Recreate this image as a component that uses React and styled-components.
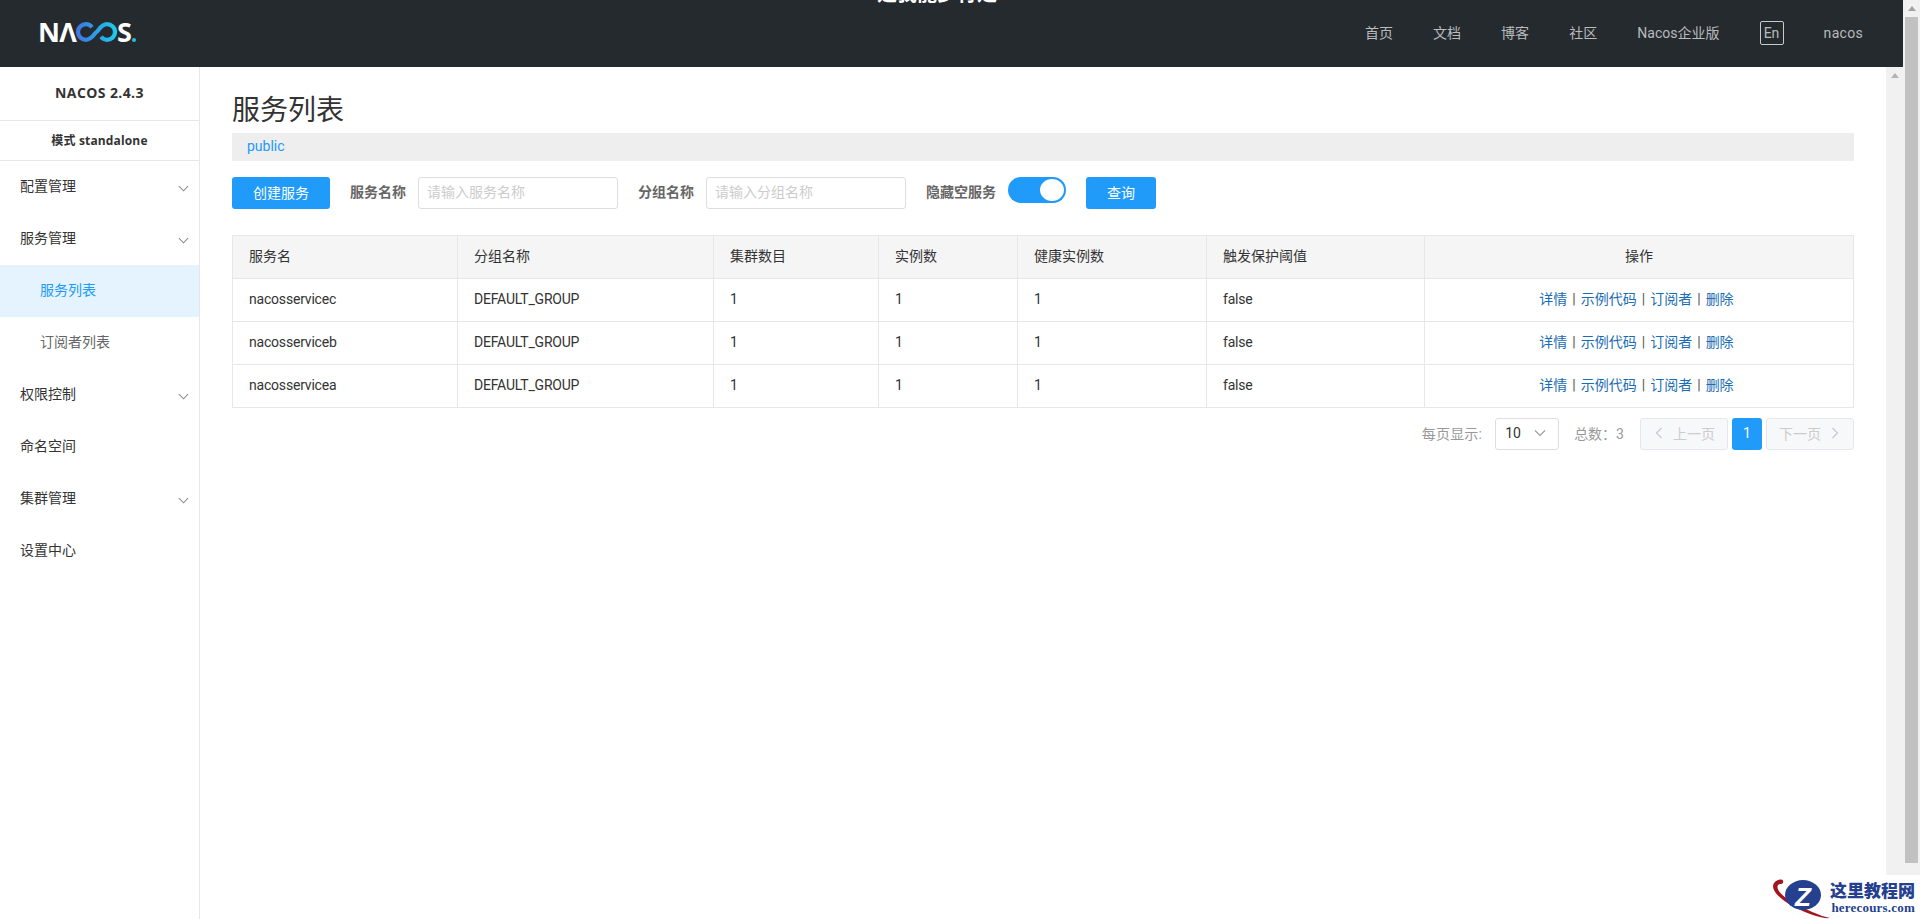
import React from "react";
import styled, { createGlobalStyle } from "styled-components";

const GlobalStyle = createGlobalStyle`
  html, body {
    margin: 0;
    height: 100%;
    overflow: hidden;
    background: #fff;
  }
  body {
    font-family: Roboto, "Noto Sans CJK SC", sans-serif;
    font-size: 14px;
    color: #333;
  }
  * {
    box-sizing: border-box;
  }
`;

const columns = [
  { title: "服务名", width: 225 },
  { title: "分组名称", width: 256 },
  { title: "集群数目", width: 165 },
  { title: "实例数", width: 139 },
  { title: "健康实例数", width: 189 },
  { title: "触发保护阈值", width: 218 },
  { title: "操作", width: 429, center: true },
];

const services = ["nacosservicec", "nacosserviceb", "nacosservicea"];
const actions = ["详情", "示例代码", "订阅者", "删除"];
const navLinks = ["首页", "文档", "博客", "社区", "Nacos企业版"];

const menu = [
  { label: "配置管理", arrow: true },
  { label: "服务管理", arrow: true },
  { label: "服务列表", sub: true, active: true },
  { label: "订阅者列表", sub: true },
  { label: "权限控制", arrow: true },
  { label: "命名空间" },
  { label: "集群管理", arrow: true },
  { label: "设置中心" },
];

const Chevron = ({ dir = "down", color = "#888", size = 11 }) => (
  <ChevronSvg width={size} height={size} viewBox="0 0 12 12" $dir={dir}>
    <polyline points="1,3.5 6,8.5 11,3.5" fill="none" stroke={color} strokeWidth="1.1" />
  </ChevronSvg>
);

export default function App() {
  return (
    <Page>
      <GlobalStyle />
      <Shell>
        <Header>
          <ClippedTitle>是我能步行走</ClippedTitle>
          <Logo aria-label="NACOS">
            <LogoLetters>NΛ</LogoLetters>
            <svg width="41" height="20" viewBox="0 0 41 20">
              <defs>
                <linearGradient id="nacosLoop" x1="0" x2="1" y1="0" y2="0">
                  <stop offset="0" stopColor="#3f78e0" />
                  <stop offset="0.45" stopColor="#2d9be8" />
                  <stop offset="1" stopColor="#20c8ea" />
                </linearGradient>
              </defs>
              <path
                d="M16 5.2C14.5 3.3 12.6 2.200 10 2.200C5.4 2.200 2 5.600 2 10C2 14.400 5.400 17.800 10 17.800C16 17.800 19.500 10 20.500 10C21.500 10 25 2.200 31 2.200C35.600 2.200 39 5.600 39 10C39 14.400 35.600 17.800 31 17.800C28.400 17.800 26.500 16.700 25 14.800"
                fill="none"
                stroke="url(#nacosLoop)"
                strokeWidth="4.2"
              />
            </svg>
            <LogoLetters>S</LogoLetters>
            <LogoDot />
          </Logo>
          <Nav>
            {navLinks.map((link) => (
              <NavLink key={link}>{link}</NavLink>
            ))}
            <LangBox>En</LangBox>
            <NavLink $spaced>nacos</NavLink>
          </Nav>
        </Header>
        <Body>
          <Sidebar>
            <VersionRow>NACOS 2.4.3</VersionRow>
            <ModeRow>模式 standalone</ModeRow>
            {menu.map((item) => (
              <MenuItem key={item.label} $sub={item.sub} $active={item.active}>
                {item.label}
                {item.arrow && (
                  <MenuArrow>
                    <Chevron />
                  </MenuArrow>
                )}
              </MenuItem>
            ))}
          </Sidebar>
          <Main>
            <Title>服务列表</Title>
            <NamespaceBar>public</NamespaceBar>
            <Toolbar>
              <PrimaryButton $width={98}>创建服务</PrimaryButton>
              <FormItem>
                <FormLabel>服务名称</FormLabel>
                <TextInput placeholder="请输入服务名称" />
              </FormItem>
              <FormItem>
                <FormLabel>分组名称</FormLabel>
                <TextInput placeholder="请输入分组名称" />
              </FormItem>
              <FormItem>
                <FormLabel>隐藏空服务</FormLabel>
                <Switch>
                  <SwitchKnob />
                </Switch>
              </FormItem>
              <PrimaryButton $width={70}>查询</PrimaryButton>
            </Toolbar>
            <ServiceTable>
              <colgroup>
                {columns.map((col) => (
                  <TableCol key={col.title} $width={col.width} />
                ))}
              </colgroup>
              <thead>
                <tr>
                  {columns.map((col) => (
                    <HeadCell key={col.title} $center={col.center}>
                      {col.title}
                    </HeadCell>
                  ))}
                </tr>
              </thead>
              <tbody>
                {services.map((name) => (
                  <tr key={name}>
                    <Cell>{name}</Cell>
                    <Cell>DEFAULT_GROUP</Cell>
                    <Cell>1</Cell>
                    <Cell>1</Cell>
                    <Cell>1</Cell>
                    <Cell>false</Cell>
                    <ActionCell>
                      {actions.map((action, index) => (
                        <React.Fragment key={action}>
                          {index > 0 && <Separator>|</Separator>}
                          <ActionLink>{action}</ActionLink>
                        </React.Fragment>
                      ))}
                    </ActionCell>
                  </tr>
                ))}
              </tbody>
            </ServiceTable>
            <Pagination>
              <PageLabel>每页显示:</PageLabel>
              <PageSelect>
                10
                <Chevron color="#999" size={12} />
              </PageSelect>
              <PageTotal>总数：3</PageTotal>
              <PageButtons>
                <PageNavButton>
                  <Chevron dir="left" color="#c4c6cf" size={12} />
                  上一页
                </PageNavButton>
                <PageCurrent>1</PageCurrent>
                <PageNavButton>
                  下一页
                  <Chevron dir="right" color="#c4c6cf" size={12} />
                </PageNavButton>
              </PageButtons>
            </Pagination>
          </Main>
          <InnerScrollbar>
            <ScrollArrow $color="#b4b4b4" />
          </InnerScrollbar>
        </Body>
      </Shell>
      <OuterScrollbar>
        <ScrollArrow $color="#a3a3a3" />
        <ScrollThumb />
      </OuterScrollbar>
      <Watermark>
        <WatermarkLogo width="58" height="42" viewBox="0 0 58 42">
          <path
            d="M6 3C1 5 0 9 2 13C6 22 24 33 44 39C49 40.500 54 41.500 58 41C48 39 32 32 19 24C11 19 5 14 5.500 9.500C5.800 7.500 7 7 9 7C11.500 7 12 3.500 10 2.800C8.500 2.300 7.200 2.500 6 3Z"
            fill="#a3141c"
          />
          <ellipse cx="31" cy="18" rx="18" ry="15" fill="#25408f" />
          <WatermarkZ x="31" y="29">Z</WatermarkZ>
        </WatermarkLogo>
        <WatermarkText>
          <WatermarkName>这里教程网</WatermarkName>
          <WatermarkUrl>herecours.com</WatermarkUrl>
        </WatermarkText>
      </Watermark>
    </Page>
  );
}

const Page = styled.div`
  position: relative;
  display: flex;
  width: 100%;
  height: 100vh;
  overflow: hidden;
`;

const Shell = styled.div`
  flex: 1;
  min-width: 0;
  display: flex;
  flex-direction: column;
`;

const Header = styled.header`
  position: relative;
  flex: 0 0 67px;
  display: flex;
  align-items: center;
  justify-content: space-between;
  padding: 0 40px 0 38px;
  background: #252a2f;
  overflow: hidden;
`;

const ClippedTitle = styled.div`
  position: absolute;
  left: 877px;
  top: -16px;
  font-size: 20px;
  line-height: 20px;
  font-weight: 700;
  color: #fff;
  white-space: nowrap;
`;

const Logo = styled.div`
  display: flex;
  align-items: center;
  margin-top: -3px;
`;

const LogoLetters = styled.span`
  font-family: "Open Sans", sans-serif;
  font-size: 27px;
  line-height: 26px;
  font-weight: 700;
  color: #fff;
  letter-spacing: -0.8px;
`;

const LogoDot = styled.span`
  align-self: flex-end;
  width: 4px;
  height: 4px;
  margin: 0 0 3px 1px;
  border-radius: 50%;
  background: #22c4d6;
`;

const Nav = styled.nav`
  display: flex;
  align-items: center;
  gap: 40.1px;
  margin-top: -2px;
`;

const NavLink = styled.a`
  color: #b9bbbd;
  font-size: 14px;
  line-height: 20px;
  white-space: nowrap;
  letter-spacing: ${(p) => (p.$spaced ? "0.3px" : "0")};
`;

const LangBox = styled.span`
  display: flex;
  align-items: center;
  justify-content: center;
  width: 24px;
  height: 24px;
  border: 1px solid #c8c9ca;
  border-radius: 2px;
  color: #b9bbbd;
  font-size: 14px;
`;

const Body = styled.div`
  flex: 1;
  min-height: 0;
  display: flex;
`;

const Sidebar = styled.aside`
  flex: 0 0 200px;
  border-right: 1px solid #e6e7eb;
`;

const VersionRow = styled.div`
  height: 54px;
  padding-bottom: 2px;
  display: flex;
  align-items: center;
  justify-content: center;
  border-bottom: 1px solid #e6e7eb;
  font-family: "Open Sans", "Noto Sans CJK SC", sans-serif;
  font-size: 14px;
  font-weight: 700;
  letter-spacing: 0.4px;
  color: #333;
`;

const ModeRow = styled.div`
  height: 40px;
  padding-bottom: 2px;
  display: flex;
  align-items: center;
  justify-content: center;
  border-bottom: 1px solid #e6e7eb;
  font-family: "Open Sans", "Noto Sans CJK SC", sans-serif;
  font-size: 12px;
  font-weight: 700;
  letter-spacing: 0.15px;
  color: #333;
`;

const MenuItem = styled.div`
  position: relative;
  height: 52px;
  display: flex;
  align-items: center;
  padding-left: ${(p) => (p.$sub ? "40px" : "20px")};
  padding-bottom: 4px;
  background: ${(p) => (p.$active ? "#e4f3fe" : "transparent")};
  color: ${(p) => (p.$active ? "#209bfa" : p.$sub ? "#666" : "#333")};
  font-size: 14px;
`;

const MenuArrow = styled.span`
  position: absolute;
  right: 10px;
  top: 22px;
  display: flex;
`;

const ChevronSvg = styled.svg`
  display: block;
  flex: none;
  transform: rotate(${(p) => (p.$dir === "left" ? 90 : p.$dir === "right" ? -90 : 0)}deg);
`;

const Main = styled.main`
  flex: 1;
  min-width: 0;
  padding: 21px 32px 0 32px;
`;

const Title = styled.h1`
  margin: 0;
  font-size: 28px;
  line-height: 45px;
  font-weight: 400;
  color: #333;
`;

const NamespaceBar = styled.div`
  height: 28px;
  padding-left: 15px;
  background: #eee;
  color: #209bfa;
  font-size: 14px;
  line-height: 26px;
`;

const Toolbar = styled.div`
  display: flex;
  align-items: flex-start;
  gap: 20px;
  margin-top: 16px;
`;

const PrimaryButton = styled.button`
  width: ${(p) => p.$width}px;
  height: 32px;
  padding: 0 0 2px;
  border: none;
  border-radius: 3px;
  background: #209bfa;
  color: #fff;
  font: inherit;
  font-size: 14px;
`;

const FormItem = styled.div`
  display: flex;
  align-items: flex-start;
  gap: 12px;
`;

const FormLabel = styled.label`
  font-size: 14px;
  font-weight: 700;
  line-height: 30px;
  color: #666;
  white-space: nowrap;
`;

const TextInput = styled.input`
  width: 200px;
  height: 32px;
  padding: 0 8px 2px;
  border: 1px solid #dcdee3;
  border-radius: 3px;
  outline: none;
  font: inherit;
  font-size: 14px;
  &::placeholder {
    color: #ccc;
  }
`;

const Switch = styled.div`
  display: flex;
  justify-content: flex-end;
  width: 58px;
  height: 26px;
  padding: 2px;
  border-radius: 13px;
  background: #209bfa;
`;

const SwitchKnob = styled.div`
  width: 24px;
  height: 22px;
  border-radius: 50%;
  background: #fff;
`;

const ServiceTable = styled.table`
  width: calc(100% - 1px);
  margin-top: 26px;
  table-layout: fixed;
  border-collapse: collapse;
  border: 1px solid #e6e7eb;
`;

const TableCol = styled.col`
  width: ${(p) => p.$width}px;
`;

const HeadCell = styled.th`
  height: 43px;
  padding: 0 16px 4px;
  border: 1px solid #e6e7eb;
  background: #f5f5f5;
  color: #333;
  font-size: 14px;
  font-weight: 400;
  text-align: ${(p) => (p.$center ? "center" : "left")};
`;

const Cell = styled.td`
  height: 43px;
  padding: 0 16px 2px;
  border: 1px solid #e6e7eb;
  color: #333;
  font-size: 14px;
  letter-spacing: -0.2px;
`;

const ActionCell = styled.td`
  height: 43px;
  padding: 0 21px 4px 16px;
  border: 1px solid #e6e7eb;
  font-size: 14px;
  text-align: center;
`;

const ActionLink = styled.a`
  color: #1a6cb5;
`;

const Separator = styled.span`
  margin: 0 5px;
  color: #555;
`;

const Pagination = styled.div`
  display: flex;
  align-items: center;
  justify-content: flex-end;
  height: 32px;
  margin-top: 10px;
`;

const PageLabel = styled.span`
  margin: -2px 13px 0 0;
  color: #999;
  font-size: 14px;
  letter-spacing: 0.2px;
`;

const PageSelect = styled.div`
  display: flex;
  align-items: center;
  justify-content: space-between;
  width: 64px;
  height: 32px;
  padding: 0 12px 2px 9px;
  border: 1px solid #dcdee3;
  border-radius: 3px;
  color: #333;
  font-size: 14px;
`;

const PageTotal = styled.span`
  margin: -2px 0 0 15px;
  color: #999;
  font-size: 14px;
`;

const PageButtons = styled.div`
  display: flex;
  gap: 4px;
  margin-left: 16px;
`;

const PageNavButton = styled.div`
  display: flex;
  align-items: center;
  justify-content: center;
  gap: 8px;
  width: 88px;
  height: 32px;
  padding-bottom: 2px;
  border: 1px solid #e6e7eb;
  border-radius: 3px;
  background: #f7f8fa;
  color: #ccc;
  font-size: 14px;
`;

const PageCurrent = styled.div`
  display: flex;
  align-items: center;
  justify-content: center;
  width: 30px;
  height: 32px;
  padding-bottom: 2px;
  border-radius: 3px;
  background: #209bfa;
  color: #fff;
  font-size: 14px;
`;

const InnerScrollbar = styled.div`
  flex: 0 0 17px;
  background: #f1f1f1;
`;

const OuterScrollbar = styled.div`
  flex: 0 0 17px;
  background: #f1f1f1;
`;

const ScrollArrow = styled.div`
  display: flex;
  justify-content: center;
  height: 17px;
  padding-top: 6px;
  &::before {
    content: "";
    width: 0;
    height: 0;
    border-left: 4px solid transparent;
    border-right: 4px solid transparent;
    border-bottom: 5px solid ${(p) => p.$color};
  }
`;

const ScrollThumb = styled.div`
  width: 13px;
  height: 846px;
  margin-left: 2px;
  background: #c1c1c1;
`;

const Watermark = styled.div`
  position: absolute;
  right: 0;
  bottom: 0;
  display: flex;
  align-items: flex-start;
  justify-content: space-between;
  width: 150px;
  height: 44px;
  padding: 2px 6px 0 2px;
  background: #fff;
`;

const WatermarkLogo = styled.svg`
  flex: none;
`;

const WatermarkZ = styled.text`
  font-family: "Liberation Sans", sans-serif;
  font-size: 26px;
  font-weight: 700;
  font-style: italic;
  fill: #fff;
  text-anchor: middle;
`;

const WatermarkText = styled.div`
  flex: none;
  text-align: right;
  white-space: nowrap;
`;

const WatermarkName = styled.div`
  font-family: "Noto Sans CJK SC", sans-serif;
  font-size: 17px;
  line-height: 22px;
  font-weight: 900;
  color: #25408f;
  margin-top: 2px;
`;

const WatermarkUrl = styled.div`
  font-family: "Liberation Serif", serif;
  font-size: 13px;
  line-height: 14px;
  font-weight: 700;
  letter-spacing: 0.2px;
  color: #25408f;
`;
